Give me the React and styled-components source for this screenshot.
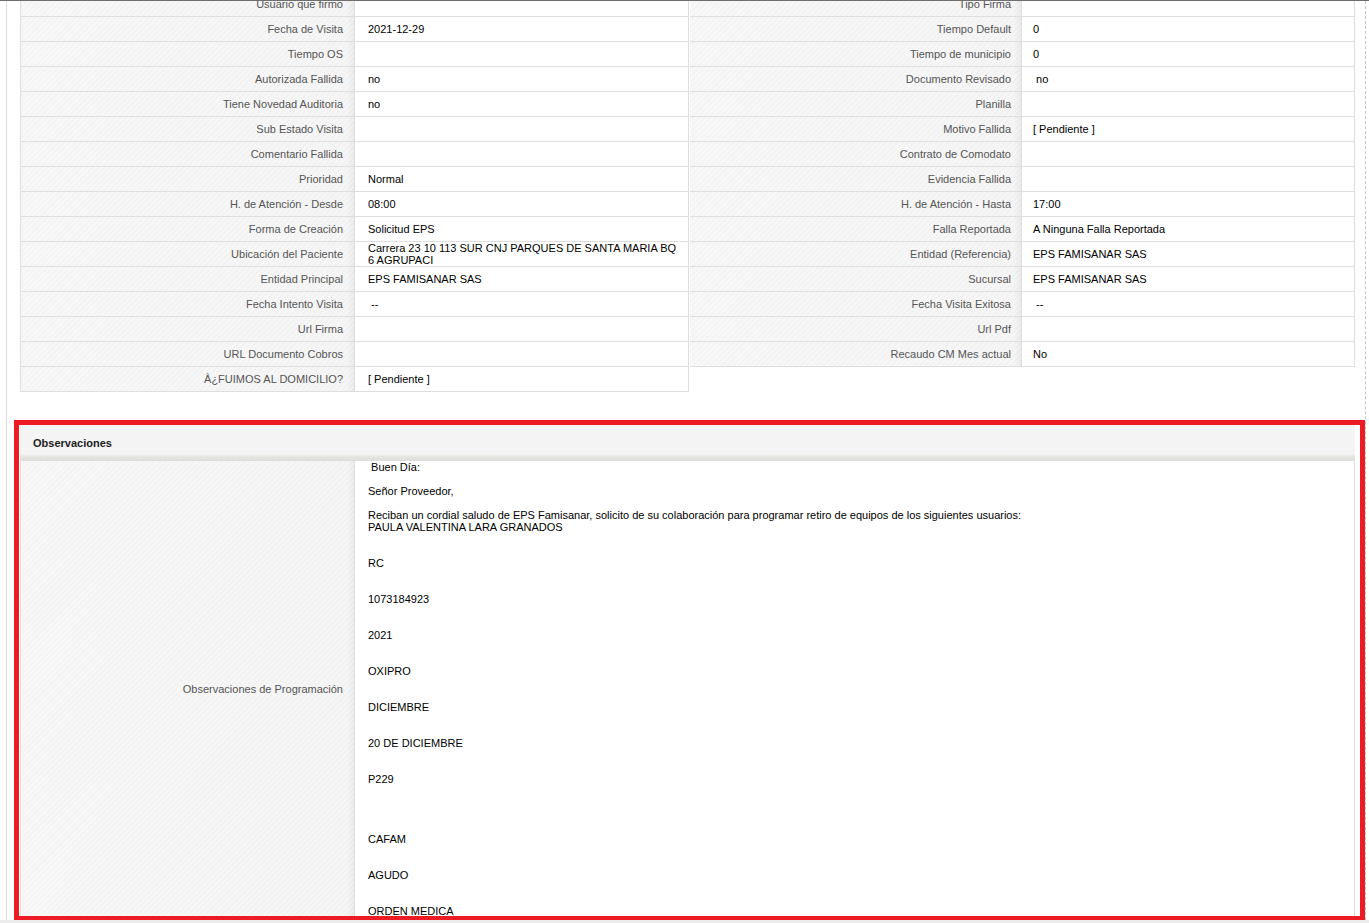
import styled, { createGlobalStyle } from "styled-components";

const GlobalStyle = createGlobalStyle`
  html, body {
    margin: 0;
    padding: 0;
    background: #fff;
  }
  body {
    font-family: "Liberation Sans", Arial, sans-serif;
    font-size: 11px;
    color: #000;
    overflow: hidden;
  }
`;

const Page = styled.div`
  height: 923px;
  display: flex;
  flex-direction: column;
  overflow: hidden;
`;

const TopRule = styled.div`
  height: 1px;
  background: #6e6e6e;
  flex: none;
`;

const Frame = styled.div`
  flex: 1;
  min-height: 0;
  overflow: hidden;
  margin-left: 6px;
  width: 1360px;
  box-sizing: border-box;
  border-left: 1px solid #dcdcdc;
  border-right: 1px dashed #c4c4c4;
  padding: 0 10px 0 13px;
`;

const BottomStrip = styled.div`
  height: 3px;
  background: #ececec;
  flex: none;
`;

const Fields = styled.div`
  display: flex;
  align-items: flex-start;
  margin-top: -9px;
`;

const Table = styled.div`
  display: grid;
  grid-template-columns: ${(p) => (p.$first ? "334px 334px" : "332px 1fr")};
  flex: ${(p) => (p.$first ? "0 0 669px" : "1 1 auto")};
  border-left: ${(p) => (p.$first ? "1px solid #dedede" : "none")};
`;

const Label = styled.div`
  height: 25px;
  box-sizing: border-box;
  display: flex;
  align-items: center;
  justify-content: flex-end;
  padding-right: ${(p) => (p.$right ? "10px" : "11px")};
  color: #555;
  border-right: 1px solid #dedede;
  border-bottom: 1px solid #dedede;
  background:
    repeating-linear-gradient(135deg, rgba(255,255,255,0.18) 0 2px, rgba(0,0,0,0.006) 2px 4px),
    linear-gradient(to right, #f6f6f6 0%, #f4f4f4 calc(100% - 7px), #e9e9e9 100%);
  white-space: nowrap;
`;

const Value = styled.div`
  height: 25px;
  box-sizing: border-box;
  display: flex;
  align-items: center;
  padding: 0 10px 0 ${(p) => (p.$right ? "11px" : "13px")};
  line-height: 12px;
  color: #000;
  background: #fff;
  border-right: 1px solid #dedede;
  border-bottom: 1px solid #dedede;
  white-space: pre-wrap;
`;

const RedBox = styled.div`
  margin: 28px -10px 0 -6px;
  height: 500px;
  box-sizing: border-box;
  border: 5px solid #ed1c24;
  border-bottom-width: 4px;
  padding: 0 5px 0 1px;
  overflow: hidden;
`;

const PanelHeader = styled.div`
  height: 36px;
  display: flex;
  align-items: center;
  padding-left: 13px;
  font-weight: bold;
  font-size: 11px;
  color: #222;
  background: linear-gradient(
    to bottom,
    #f5f5f5 0%,
    #f4f4f4 80%,
    #e7e7e4 86%,
    #dcdcd8 100%
  );
`;

const ObsRow = styled.div`
  display: grid;
  grid-template-columns: 334px 1fr;
  border-left: 1px solid #dedede;
`;

const ObsLabel = styled(Label)`
  height: auto;
`;

const ObsText = styled.div`
  padding: 0 10px 0 13px;
  line-height: 12px;
  white-space: pre-wrap;
  color: #000;
  border-right: 1px solid #dedede;
  border-bottom: 1px solid #dedede;
`;

const leftRows = [
  ["Usuario que firmo", ""],
  ["Fecha de Visita", "2021-12-29"],
  ["Tiempo OS", ""],
  ["Autorizada Fallida", "no"],
  ["Tiene Novedad Auditoria", "no"],
  ["Sub Estado Visita", ""],
  ["Comentario Fallida", ""],
  ["Prioridad", "Normal"],
  ["H. de Atención - Desde", "08:00"],
  ["Forma de Creación", "Solicitud EPS"],
  ["Ubicación del Paciente", "Carrera 23 10 113 SUR CNJ PARQUES DE SANTA MARIA BQ 6 AGRUPACI"],
  ["Entidad Principal", "EPS FAMISANAR SAS"],
  ["Fecha Intento Visita", " --"],
  ["Url Firma", ""],
  ["URL Documento Cobros", ""],
  ["Â¿FUIMOS AL DOMICILIO?", "[ Pendiente ]"],
];

const rightRows = [
  ["Tipo Firma", ""],
  ["Tiempo Default", "0"],
  ["Tiempo de municipio", "0"],
  ["Documento Revisado", " no"],
  ["Planilla", ""],
  ["Motivo Fallida", "[ Pendiente ]"],
  ["Contrato de Comodato", ""],
  ["Evidencia Fallida", ""],
  ["H. de Atención - Hasta", "17:00"],
  ["Falla Reportada", "A Ninguna Falla Reportada"],
  ["Entidad (Referencia)", "EPS FAMISANAR SAS"],
  ["Sucursal", "EPS FAMISANAR SAS"],
  ["Fecha Visita Exitosa", " --"],
  ["Url Pdf", ""],
  ["Recaudo CM Mes actual", "No"],
];

const observaciones = [
  " Buen Día:",
  "",
  "Señor Proveedor,",
  "",
  "Reciban un cordial saludo de EPS Famisanar, solicito de su colaboración para programar retiro de equipos de los siguientes usuarios:",
  "PAULA VALENTINA LARA GRANADOS",
  "",
  "",
  "RC",
  "",
  "",
  "1073184923",
  "",
  "",
  "2021",
  "",
  "",
  "OXIPRO",
  "",
  "",
  "DICIEMBRE",
  "",
  "",
  "20 DE DICIEMBRE",
  "",
  "",
  "P229",
  "",
  "",
  "",
  "",
  "CAFAM",
  "",
  "",
  "AGUDO",
  "",
  "",
  "ORDEN MEDICA",
].join("\n");

const FieldTable = ({ rows, first }) => (
  <Table $first={first}>
    {rows.map(([label, value]) => [
      <Label key={label + "-l"} $right={!first}>
        {label}
      </Label>,
      <Value key={label + "-v"} $right={!first}>
        {value}
      </Value>,
    ])}
  </Table>
);

export default function App() {
  return (
    <Page>
      <GlobalStyle />
      <TopRule />
      <Frame>
        <Fields>
          <FieldTable rows={leftRows} first />
          <FieldTable rows={rightRows} />
        </Fields>
        <RedBox>
          <PanelHeader>Observaciones</PanelHeader>
          <ObsRow>
            <ObsLabel>Observaciones de Programación</ObsLabel>
            <ObsText>{observaciones}</ObsText>
          </ObsRow>
        </RedBox>
      </Frame>
      <BottomStrip />
    </Page>
  );
}
